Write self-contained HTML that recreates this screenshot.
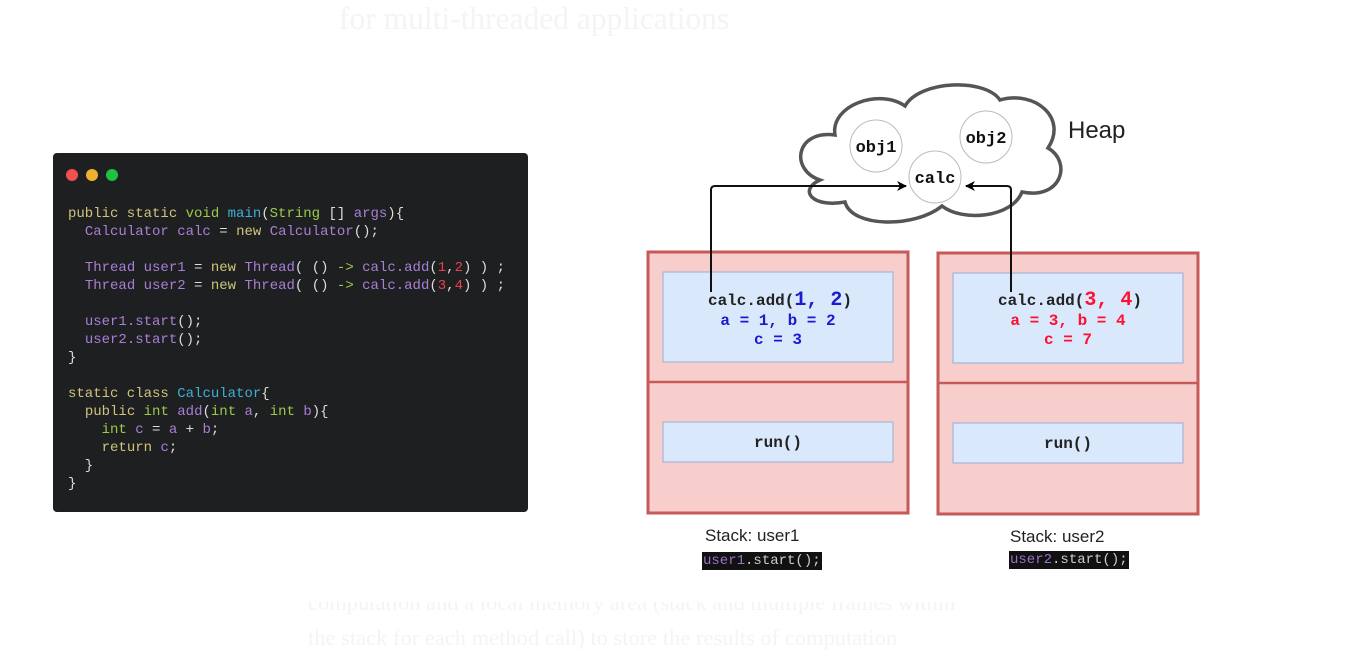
<!DOCTYPE html>
<html><head><meta charset="utf-8"><style>
body{margin:0;width:1345px;height:663px;background:#fff;position:relative;overflow:hidden;font-family:"Liberation Sans",sans-serif}
.bg{position:absolute;font-family:"Liberation Serif",serif;color:#f4f4f4;font-size:31.5px;white-space:nowrap}
.win{position:absolute;left:53px;top:153px;width:475px;height:359px;background:#1e1f21;border-radius:4px}
.dot{position:absolute;top:16px;width:12px;height:12px;border-radius:50%}
pre{position:absolute;left:15px;top:52px;margin:0;font-family:"Liberation Mono",monospace;font-size:14px;line-height:18px;color:#ddd}
.k{color:#cfc47c}.g{color:#9cc94c}.p{color:#a97fd6}.b{color:#3cb0d6}.r{color:#e8404e}
.lbl{position:absolute;font-size:17px;color:#222}
.cl{position:absolute;background:#111;color:#9a72c8;font-family:"Liberation Mono",monospace;font-size:14px;line-height:18px;padding:0 1px}
</style></head><body>
<div class="bg" style="left:339px;top:1px">for multi-threaded applications</div>
<div class="bg" style="left:308px;top:590px;font-size:22.5px;clip-path:inset(12px 0 0 0)">computation and a local memory area (stack and multiple frames within</div>
<div class="bg" style="left:308px;top:625px;font-size:22.5px">the stack for each method call) to store the results of computation</div>
<div class="win">
<div class="dot" style="left:13px;background:#f05050"></div>
<div class="dot" style="left:33px;background:#f0b030"></div>
<div class="dot" style="left:53px;background:#20c040"></div>
<pre><span class="k">public static</span> <span class="g">void</span> <span class="b">main</span>(<span class="g">String</span> [] <span class="p">args</span>){
  <span class="p">Calculator calc</span> = <span class="k">new</span> <span class="p">Calculator</span>();

  <span class="p">Thread user1</span> = <span class="k">new</span> <span class="p">Thread</span>( () <span class="g">-&gt;</span> <span class="p">calc.add</span>(<span class="r">1</span>,<span class="r">2</span>) ) ;
  <span class="p">Thread user2</span> = <span class="k">new</span> <span class="p">Thread</span>( () <span class="g">-&gt;</span> <span class="p">calc.add</span>(<span class="r">3</span>,<span class="r">4</span>) ) ;

  <span class="p">user1.start</span>();
  <span class="p">user2.start</span>();
}

<span class="k">static class</span> <span class="b">Calculator</span>{
  <span class="k">public</span> <span class="g">int</span> <span class="p">add</span>(<span class="g">int</span> <span class="p">a</span>, <span class="g">int</span> <span class="p">b</span>){
    <span class="g">int</span> <span class="p">c</span> = <span class="p">a</span> + <span class="p">b</span>;
    <span class="k">return</span> <span class="p">c</span>;
  }
}</pre>
</div>
<svg width="1345" height="663" style="position:absolute;left:0;top:0">
<defs><marker id="ah" markerWidth="10" markerHeight="10" refX="9" refY="5" orient="auto" markerUnits="userSpaceOnUse"><path d="M0,0 L10,5 L0,10 L3,5Z" fill="#000"/></marker></defs>
<path d="M820 180 C790 170,795 130,835 135 C830 105,880 88,905 106 C920 80,985 78,1000 100 C1035 90,1068 118,1048 148 C1072 162,1062 200,1022 192 C1012 218,962 222,942 206 C915 228,852 228,845 202 C812 208,798 190,820 180Z" fill="#fff" stroke="#555" stroke-width="3.5"/>
<circle cx="876" cy="146" r="26" fill="#fff" stroke="#bbb"/>
<circle cx="986" cy="137" r="26" fill="#fff" stroke="#bbb"/>
<circle cx="935" cy="177" r="26" fill="#fff" stroke="#bbb"/>
<g font-family="Liberation Mono,monospace" font-weight="bold" font-size="17" text-anchor="middle" fill="#111">
<text x="876" y="152">obj1</text><text x="986" y="143">obj2</text><text x="935" y="183">calc</text></g>
<text x="1068" y="138" font-size="24" font-family="Liberation Sans,sans-serif" fill="#222">Heap</text>
<rect x="648" y="252" width="260" height="261" fill="#f8cecc" stroke="#c65a5a" stroke-width="3"/>
<line x1="648" y1="382" x2="908" y2="382" stroke="#c65a5a" stroke-width="2.5"/>
<rect x="663" y="272" width="230" height="90" fill="#dae8fc" stroke="#9aaed4"/>
<rect x="663" y="422" width="230" height="40" fill="#dae8fc" stroke="#9aaed4"/>
<rect x="938" y="253" width="260" height="261" fill="#f8cecc" stroke="#c65a5a" stroke-width="3"/>
<line x1="938" y1="383" x2="1198" y2="383" stroke="#c65a5a" stroke-width="2.5"/>
<rect x="953" y="273" width="230" height="90" fill="#dae8fc" stroke="#9aaed4"/>
<rect x="953" y="423" width="230" height="40" fill="#dae8fc" stroke="#9aaed4"/>
<g font-family="Liberation Mono,monospace" font-weight="bold" font-size="16" text-anchor="middle">
<text x="780" y="305" fill="#222">calc.add(<tspan fill="#1a1ad0" font-size="20">1, 2</tspan>)</text>
<text x="778" y="325" fill="#1a1ad0">a = 1, b = 2</text>
<text x="778" y="344" fill="#1a1ad0">c = 3</text>
<text x="778" y="447" fill="#222">run()</text>
<text x="1070" y="305" fill="#222">calc.add(<tspan fill="#ff1030" font-size="20">3, 4</tspan>)</text>
<text x="1068" y="325" fill="#ff1030">a = 3, b = 4</text>
<text x="1068" y="344" fill="#ff1030">c = 7</text>
<text x="1068" y="448" fill="#222">run()</text></g>
<path d="M711 292 V190 Q711 186 715 186 H906" fill="none" stroke="#111" stroke-width="2" marker-end="url(#ah)"/>
<path d="M1011 292 V190 Q1011 186 1007 186 H966" fill="none" stroke="#111" stroke-width="2" marker-end="url(#ah)"/>
</svg>
<div class="lbl" style="left:705px;top:526px">Stack: user1</div>
<div class="lbl" style="left:1010px;top:527px">Stack: user2</div>
<div class="cl" style="left:702px;top:552px">user1<span style="color:#ccc">.start();</span></div>
<div class="cl" style="left:1009px;top:551px">user2<span style="color:#ccc">.start();</span></div>
</body></html>
